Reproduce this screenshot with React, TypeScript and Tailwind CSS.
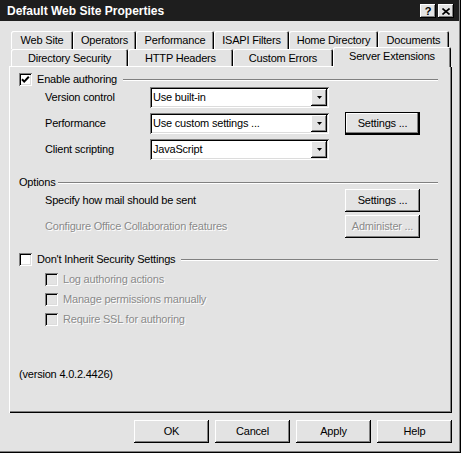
import React from "react";

const raised =
  "shadow-[inset_-1px_-1px_0_#000,inset_1px_1px_0_#fff,inset_-2px_-2px_0_#808080]";
const sunken =
  "shadow-[inset_1px_1px_0_#808080,inset_-1px_-1px_0_#fff,inset_2px_2px_0_#000,inset_-2px_-2px_0_#dcdcdc]";
const defaultBtn =
  "shadow-[inset_0_0_0_1px_#000,inset_-2px_-2px_0_#000,inset_-3px_-3px_0_#808080,inset_2px_2px_0_#fff]";
const disabledText = "text-[#8a8a8a] [text-shadow:1px_1px_0_#fff]";

function Check({ checked, disabled }: { checked?: boolean; disabled?: boolean }) {
  return (
    <div
      className={`w-[13px] h-[13px] shrink-0 flex items-center justify-center ${
        disabled ? "bg-[#e3e3e3]" : "bg-white"
      } ${sunken}`}
    >
      {checked && (
        <svg width="13" height="13" viewBox="0 0 13 13">
          <path d="M3 6.3 L5.2 8.6 L9.8 3.8" stroke="#000" strokeWidth="2" fill="none" />
        </svg>
      )}
    </div>
  );
}

function Etch({ className = "" }: { className?: string }) {
  return (
    <div className={`flex-1 h-[2px] shadow-[inset_0_1px_0_#808080,inset_0_-1px_0_#fff] ${className}`} />
  );
}

function Btn({
  label,
  primary,
  disabled,
}: {
  label: string;
  primary?: boolean;
  disabled?: boolean;
}) {
  return (
    <div
      className={`w-[75px] h-[23px] shrink-0 flex items-center justify-center ${
        primary ? defaultBtn : raised
      } ${disabled ? disabledText : ""}`}
    >
      {label}
    </div>
  );
}

function Select({ value }: { value: string }) {
  return (
    <div className={`w-[179px] h-[21px] bg-white flex p-[2px] ${sunken}`}>
      <span className="flex-1 pl-[1px] flex items-center">{value}</span>
      <div className={`w-[16px] bg-[#e3e3e3] flex items-center justify-center ${raised}`}>
        <svg width="5" height="3" viewBox="0 0 5 3">
          <path d="M0 0h5L2.5 3z" fill="#000" />
        </svg>
      </div>
    </div>
  );
}

const tabShadow =
  "shadow-[inset_1px_1px_0_#fff,inset_-1px_0_0_#000,inset_-2px_0_0_#808080] rounded-t-[2px]";

const row1 = [
  { label: "Web Site", w: "w-[62px]" },
  { label: "Operators", w: "w-[63px]" },
  { label: "Performance", w: "w-[78px]" },
  { label: "ISAPI Filters", w: "w-[75px]" },
  { label: "Home Directory", w: "w-[89px]" },
  { label: "Documents", w: "w-[71px]" },
];

const row2 = [
  { label: "Directory Security", w: "w-[117px]" },
  { label: "HTTP Headers", w: "w-[105px]" },
  { label: "Custom Errors", w: "w-[100px]" },
];

export default function App() {
  return (
    <div className="w-[461px] h-[453px] bg-[#e3e3e3] text-black text-[11px] leading-[13px] tracking-[-0.2px] font-['Liberation_Sans',Arial,sans-serif] shadow-[inset_-1px_-1px_0_#000,inset_-2px_-2px_0_#808080] overflow-hidden">
      {/* Title bar */}
      <div className="h-[21px] mr-[2px] bg-[#1e1e1e] flex items-center justify-between pl-[7px] pr-[5px]">
        <span className="text-white font-bold text-[12px] tracking-normal pt-[2px]">
          Default Web Site Properties
        </span>
        <div className="flex gap-[2px] pt-[1px]">
          <div className={`w-[16px] h-[14px] bg-[#e3e3e3] flex items-center justify-center font-bold text-[11px] ${raised}`}>
            ?
          </div>
          <div className={`w-[16px] h-[14px] bg-[#e3e3e3] flex items-center justify-center ${raised}`}>
            <svg width="8" height="7" viewBox="0 0 8 7">
              <path d="M0.5 0.5 L7.5 6.5 M7.5 0.5 L0.5 6.5" stroke="#000" strokeWidth="1.6" />
            </svg>
          </div>
        </div>
      </div>

      {/* Tabs */}
      <div className="mt-[10px] ml-[11px] flex h-[18px]">
        {row1.map((t) => (
          <div key={t.label} className={`${t.w} h-[18px] flex items-center justify-center ${tabShadow}`}>
            {t.label}
          </div>
        ))}
      </div>
      <div className="ml-[11px] flex items-start h-[17px]">
        {row2.map((t) => (
          <div key={t.label} className={`${t.w} h-[17px] flex items-center justify-center pt-[2px] ${tabShadow}`}>
            {t.label}
          </div>
        ))}
        <div className={`w-[118px] h-[20px] -mt-[2px] relative z-10 bg-[#e3e3e3] flex items-center justify-center pb-[1px] ${tabShadow}`}>
          Server Extensions
        </div>
      </div>

      {/* Panel */}
      <div className="ml-[9px] w-[443px] h-[347px] pt-[7px] shadow-[inset_1px_1px_0_#fff,inset_-1px_-1px_0_#000,inset_-2px_-2px_0_#808080]">
        <div className="flex items-center h-[13px] pl-[10px] pr-[14px]">
          <Check checked />
          <span className="ml-[5px]">Enable authoring</span>
          <Etch className="ml-[6px]" />
        </div>

        <div className="mt-[1px] pl-[36px] flex flex-col gap-[5px]">
          <div className="flex items-center h-[21px]">
            <span className="w-[105px]">Version control</span>
            <Select value="Use built-in" />
          </div>
          <div className="flex items-center h-[21px]">
            <span className="w-[105px]">Performance</span>
            <Select value="Use custom settings ..." />
            <div className="ml-[16px]">
              <Btn label="Settings ..." primary />
            </div>
          </div>
          <div className="flex items-center h-[21px]">
            <span className="w-[105px]">Client scripting</span>
            <Select value="JavaScript" />
          </div>
        </div>

        <div className="mt-[16px] flex items-center h-[13px] pl-[10px] pr-[14px]">
          <span>Options</span>
          <Etch className="ml-[2px]" />
        </div>
        <div className="pl-[36px] pr-[32px] h-[23px] flex items-center justify-between">
          <span>Specify how mail should be sent</span>
          <Btn label="Settings ..." />
        </div>
        <div className="mt-[3px] pl-[36px] pr-[32px] h-[23px] flex items-center justify-between">
          <span className={disabledText}>Configure Office Collaboration features</span>
          <Btn label="Administer ..." disabled />
        </div>

        <div className="mt-[15px] flex items-center h-[13px] pl-[10px] pr-[14px]">
          <Check />
          <span className="ml-[5px]">Don't Inherit Security Settings</span>
          <Etch className="ml-[6px]" />
        </div>
        <div className="mt-[7px] pl-[36px] flex flex-col gap-[7px]">
          {["Log authoring actions", "Manage permissions manually", "Require SSL for authoring"].map((l) => (
            <div key={l} className="flex items-center h-[13px]">
              <Check disabled />
              <span className={`ml-[5px] ${disabledText}`}>{l}</span>
            </div>
          ))}
        </div>

        <div className="mt-[42px] pl-[10px]">(version 4.0.2.4426)</div>
      </div>

      {/* Dialog buttons */}
      <div className="mt-[7px] pr-[9px] flex justify-end gap-[6px]">
        <Btn label="OK" />
        <Btn label="Cancel" />
        <Btn label="Apply" />
        <Btn label="Help" />
      </div>
    </div>
  );
}
